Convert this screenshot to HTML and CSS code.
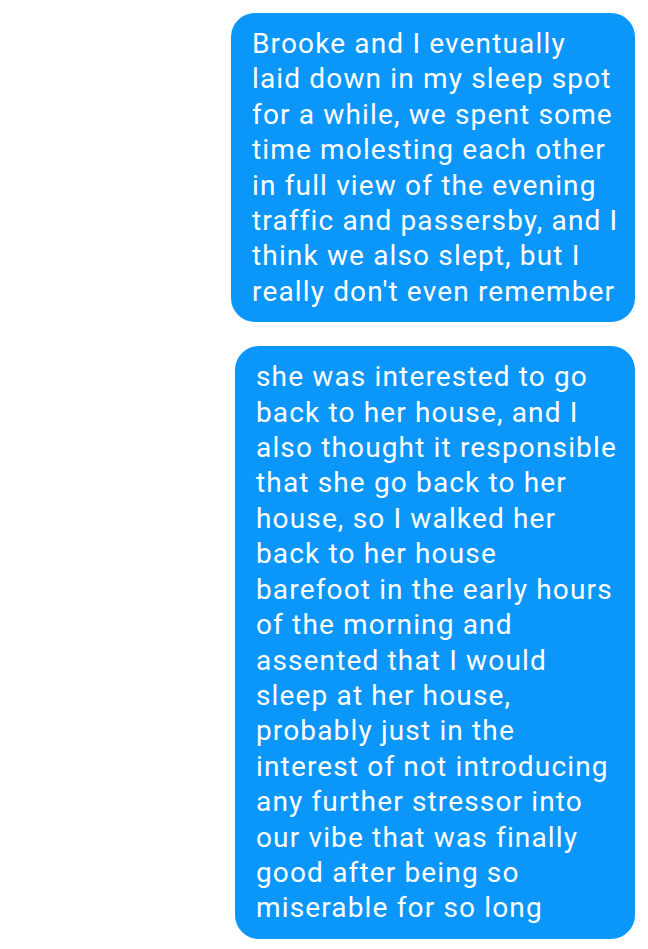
FILE: index.html
```html
<!DOCTYPE html>
<html>
<head>
<meta charset="utf-8">
<link rel="stylesheet" href="styles.css">
</head>
<body>
<div class="thread">
  <div class="bubble b1">Brooke and I eventually<br>laid down in my sleep spot<br>for a while, we spent some<br>time molesting each other<br>in full view of the evening<br>traffic and passersby, and I<br>think we also slept, but I<br>really don't even remember</div>
  <div class="bubble b2">she was interested to go<br>back to her house, and I<br>also thought it responsible<br>that she go back to her<br>house, so I walked her<br>back to her house<br>barefoot in the early hours<br>of the morning and<br>assented that I would<br>sleep at her house,<br>probably just in the<br>interest of not introducing<br>any further stressor into<br>our vibe that was finally<br>good after being so<br>miserable for so long</div>
</div>
</body>
</html>
```
FILE: styles.css
```css
html, body {
  margin: 0;
  padding: 0;
  background: #ffffff;
}
.thread {
  display: flex;
  flex-direction: column;
  align-items: flex-end;
  gap: 24px;
  padding: 13px 13px 0 0;
}
.bubble {
  box-sizing: border-box;
  background: #0b96fa;
  color: #ffffff;
  font-family: Roboto, "Noto Sans", sans-serif;
  font-size: 28px;
  letter-spacing: 1.15px;
  line-height: 35.4px;
  border-radius: 24px;
  padding: 13px 10px 13px 21px;
  white-space: nowrap;
}
.b1 { width: 404px; }
.b2 { width: 400px; }
```
